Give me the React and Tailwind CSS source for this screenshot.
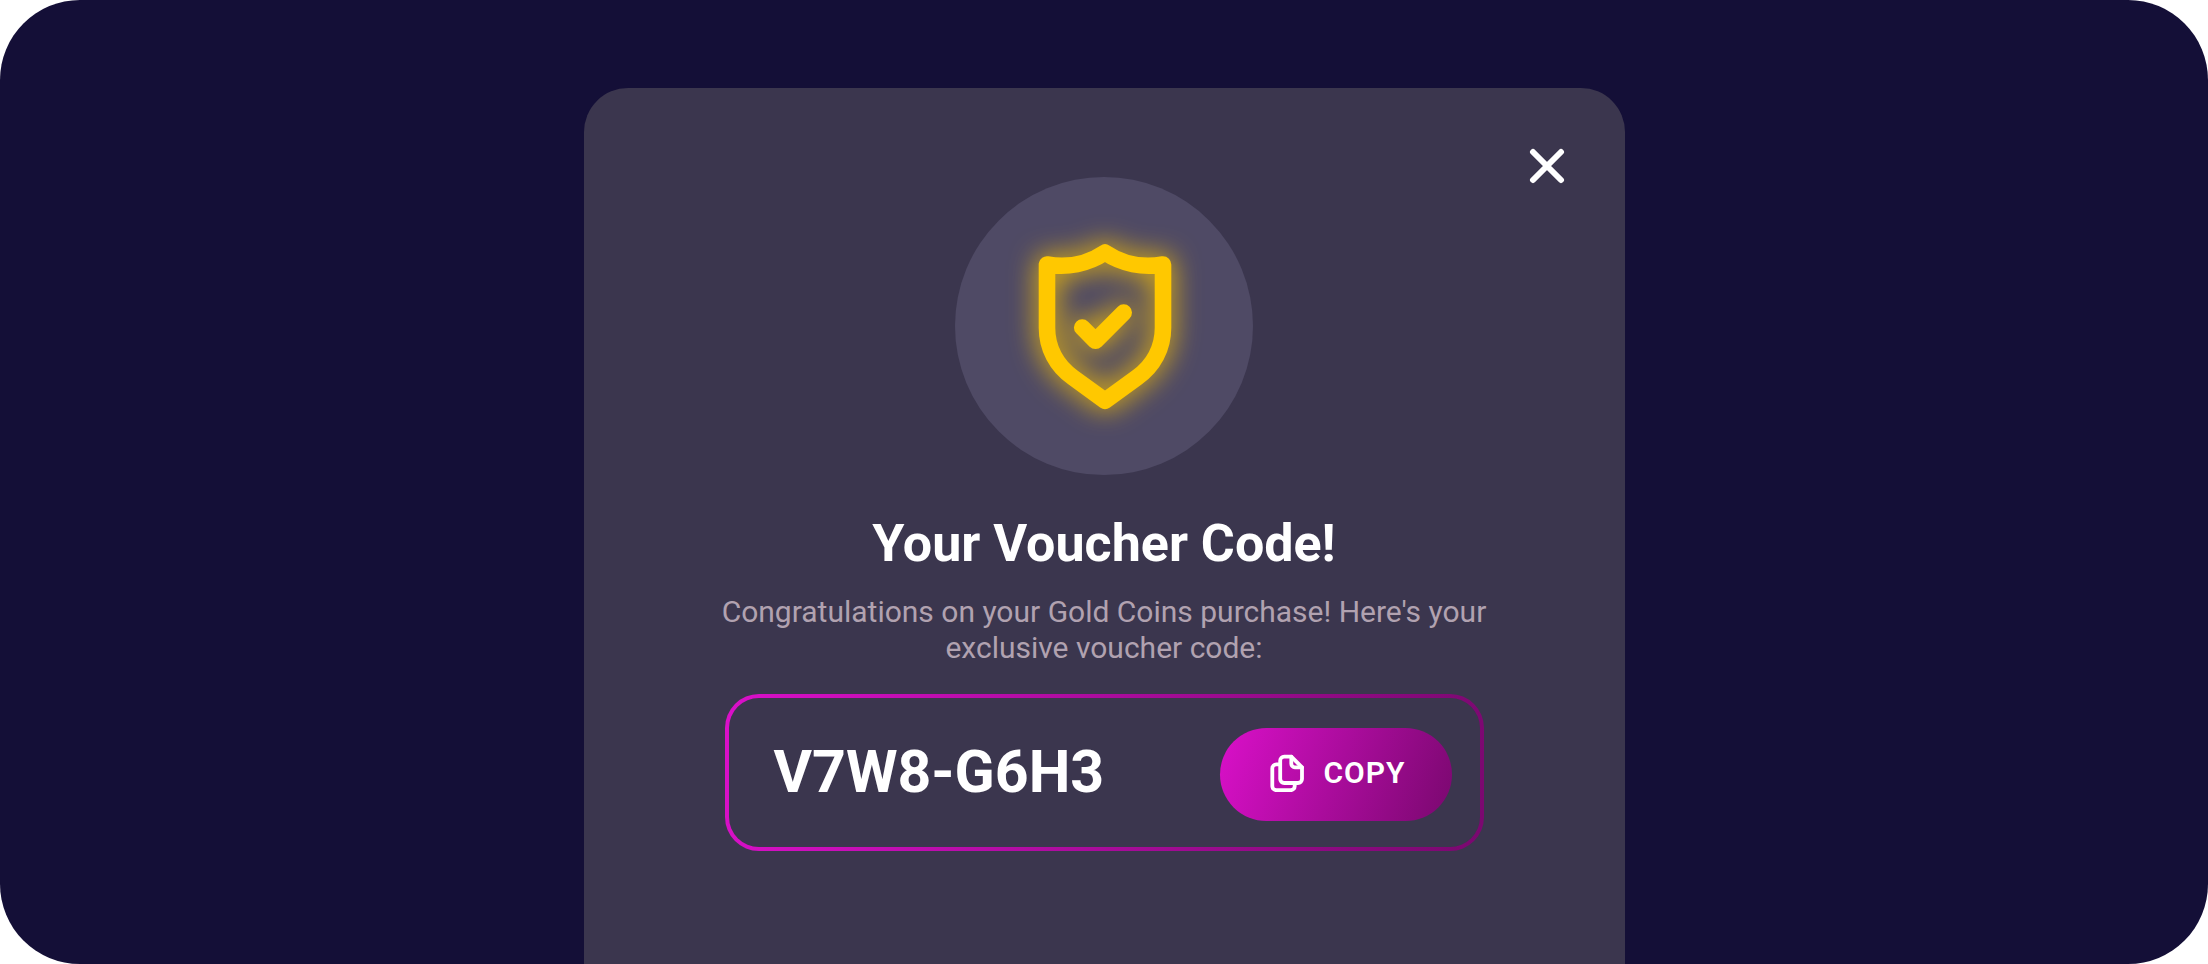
import React, { useState } from 'react';

const VOUCHER_CODE = 'V7W8-G6H3';

const ShieldIcon = () => (
  <svg
    viewBox="0 0 330 330"
    className="w-[330px] h-[330px] shrink-0 drop-shadow-[0_0_14px_#ffc800]"
    fill="none"
    stroke="#ffc800"
    strokeWidth="16.6"
    strokeLinecap="round"
    strokeLinejoin="round"
    aria-hidden="true"
  >
    <path d="M166 91.5C149 103 128 107 108 103.5V167C108 187 117.5 205 134 216.5L166 239.8L198 216.5C214.5 205 224 187 224 167V103.5C204 107 183 103 166 91.5Z" />
    <path d="M143.2 166.5L156.5 179.8L184.7 151.6" />
  </svg>
);

const CloseIcon = () => (
  <svg viewBox="0 0 36 36" className="w-9 h-9" fill="none" stroke="#fff" strokeWidth="6" strokeLinecap="round" aria-hidden="true">
    <path d="M4 4L32 32M32 4L4 32" />
  </svg>
);

const CopyIcon = () => (
  <svg
    viewBox="0 0 34 38"
    className="w-[34px] h-[38px]"
    fill="none"
    stroke="#fff"
    strokeWidth="3.8"
    strokeLinecap="round"
    strokeLinejoin="round"
    aria-hidden="true"
  >
    <path d="M21.3 2.6H14.2A4 4 0 0 0 10.2 6.6V25A4 4 0 0 0 14.2 29H28A4 4 0 0 0 32 25V13.3Z" />
    <path d="M21.3 2.6V9.8A3.5 3.5 0 0 0 24.8 13.3H32" />
    <path d="M10.2 10.3H6.3A4 4 0 0 0 2.3 14.3V32.2A4 4 0 0 0 6.3 36.2H20.7A4 4 0 0 0 24.7 32.2V29" />
  </svg>
);

const App = () => {
  const [open, setOpen] = useState(true);

  const handleCopy = () => {
    navigator.clipboard?.writeText(VOUCHER_CODE);
  };

  return (
    <main className="flex min-h-screen justify-center overflow-hidden rounded-[80px] bg-[#140f37] px-6 pt-22 font-['Roboto',sans-serif]">
      {open && (
        <section
          role="dialog"
          aria-labelledby="voucher-title"
          className="relative flex w-full max-w-[1041px] flex-col items-center rounded-t-[44px] bg-[#3b364e] px-6 pt-[89px] pb-20"
        >
          <button
            type="button"
            aria-label="Close"
            onClick={() => setOpen(false)}
            className="absolute top-[60px] right-[60px] cursor-pointer"
          >
            <CloseIcon />
          </button>

          <div className="flex h-[298px] w-[298px] items-center justify-center rounded-full bg-[#4f4a65]">
            <ShieldIcon />
          </div>

          <h1 id="voucher-title" className="mt-[39px] text-center text-[52px] leading-[60px] font-bold text-white">
            Your Voucher Code!
          </h1>
          <p className="mt-5 w-full max-w-[766px] text-center text-[30px] leading-9 text-[#b1a2b0]">
            Congratulations on your Gold Coins purchase! Here's your exclusive voucher code:
          </p>

          <div className="mt-7 w-full max-w-[759px] rounded-[34px] bg-[linear-gradient(100deg,#da10c9,#7a086f)] p-1">
            <div className="flex items-center justify-between rounded-[30px] bg-[#3b364e] pt-[30px] pr-7 pb-[26px] pl-[45px]">
              <span className="pb-1.5 text-[59px] leading-[72px] font-bold text-white">{VOUCHER_CODE}</span>
              <button
                type="button"
                onClick={handleCopy}
                className="flex h-[93px] cursor-pointer items-center gap-5 rounded-full bg-[linear-gradient(110deg,#da10c9,#7a086f)] pr-[46px] pb-1 pl-[50px] text-[30px] leading-9 font-semibold tracking-[1px] text-white"
              >
                <CopyIcon />
                COPY
              </button>
            </div>
          </div>
        </section>
      )}
    </main>
  );
};

export default App;
